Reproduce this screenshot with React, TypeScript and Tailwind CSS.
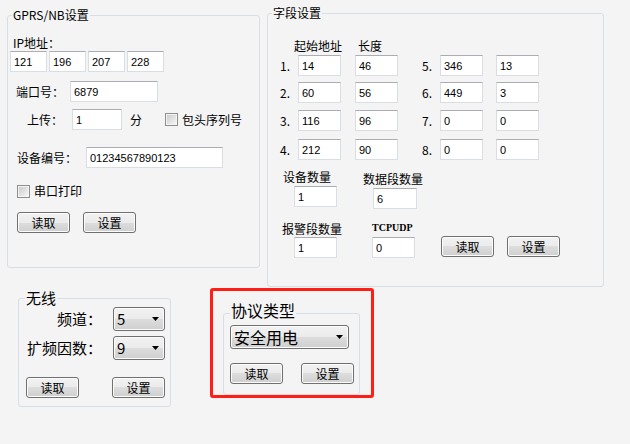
import type { ReactNode } from 'react';

const cjk = "font-['Noto_Sans_CJK_SC',sans-serif]";

function GroupBox({
  title,
  titleClass,
  className,
  children,
}: {
  title: string;
  titleClass: string;
  className: string;
  children: ReactNode;
}) {
  return (
    <div className={`relative shrink-0 rounded-[3px] border border-[#d5dfe5] ${className}`}>
      <span className={`absolute whitespace-nowrap bg-[#f4f4f4] px-[1px] ${titleClass}`}>{title}</span>
      {children}
    </div>
  );
}

function TextBox({ value, className = '' }: { value: string; className?: string }) {
  return (
    <input
      defaultValue={value}
      className={`h-[21px] shrink-0 border border-[#d9dde4] border-t-[#abadb3] bg-white pl-[3px] font-['Liberation_Sans',sans-serif] text-[11px] leading-[19px] text-black outline-none ${className}`}
    />
  );
}

function Btn({ label, className = '' }: { label: string; className?: string }) {
  return (
    <button
      className={`h-[21px] w-[53px] shrink-0 rounded-[3px] border border-[#707070] bg-[linear-gradient(#f2f2f2_0%,#ebebeb_50%,#dddddd_50%,#cfcfcf_100%)] text-[12px] leading-[19px] text-black shadow-[inset_0_0_0_1px_#fcfcfc] ${className}`}
    >
      {label}
    </button>
  );
}

function Combo({ value, className = '' }: { value: string; className?: string }) {
  return (
    <div
      className={`flex h-[24px] shrink-0 items-center justify-between rounded-[3px] border border-[#707070] bg-[linear-gradient(#f2f2f2_0%,#ebebeb_50%,#dddddd_50%,#cfcfcf_100%)] pl-[3px] pr-[5px] shadow-[inset_0_0_0_1px_#fcfcfc] ${className}`}
    >
      <span className="leading-[20px]">{value}</span>
      <svg width="7" height="4" viewBox="0 0 7 4">
        <path d="M0 0H7L3.5 4Z" fill="#000" />
      </svg>
    </div>
  );
}

function CheckBox({ className = '' }: { className?: string }) {
  return (
    <span className={`flex h-[13px] w-[13px] shrink-0 items-center justify-center border border-[#8f8f8f] bg-[#f4f4f4] ${className}`}>
      <span className="h-[9px] w-[9px] bg-[linear-gradient(135deg,#cbcbcb,#f6f6f6)]" />
    </span>
  );
}

export default function App() {
  const fields = [
    ['1.', '14', '46', '5.', '346', '13', 'mt-[2px]'],
    ['2.', '60', '56', '6.', '449', '3', 'mt-[6px]'],
    ['3.', '116', '96', '7.', '0', '0', 'mt-[7px]'],
    ['4.', '212', '90', '8.', '0', '0', 'mt-[8px]'],
  ];

  return (
    <div className={`flex h-[444px] w-[630px] flex-col overflow-hidden bg-[#f4f4f4] text-[12px] leading-[14px] text-black ${cjk}`}>
      {/* top row */}
      <div className="flex items-start">
        <GroupBox title="GPRS/NB设置" titleClass="-top-[8px] left-[4px]" className="ml-[7px] mt-[15px] h-[253px] w-[253px]">
          <div className="ml-[5px] mt-[20px]">IP地址：</div>
          <div className="ml-[2px] mt-[1px] flex gap-[2px]">
            <TextBox value="121" className="w-[37px]" />
            <TextBox value="196" className="w-[37px]" />
            <TextBox value="207" className="w-[37px]" />
            <TextBox value="228" className="w-[37px]" />
          </div>
          <div className="ml-[8px] mt-[9px] flex items-center">
            <span className="w-[54px]">端口号：</span>
            <TextBox value="6879" className="w-[88px]" />
          </div>
          <div className="ml-[19px] mt-[7px] flex items-center">
            <span className="w-[45px]">上传：</span>
            <TextBox value="1" className="w-[50px]" />
            <span className="ml-[8px]">分</span>
            <CheckBox className="ml-[23px]" />
            <span className="ml-[4px]">包头序列号</span>
          </div>
          <div className="ml-[9px] mt-[17px] flex items-center">
            <span className="w-[69px]">设备编号：</span>
            <TextBox value="01234567890123" className="h-[20px] w-[137px]" />
          </div>
          <div className="ml-[9px] mt-[16px] flex items-center">
            <CheckBox />
            <span className="ml-[4px]">串口打印</span>
          </div>
          <div className="ml-[9px] mt-[14px] flex gap-[13px]">
            <Btn label="读取" />
            <Btn label="设置" />
          </div>
        </GroupBox>

        <GroupBox title="字段设置" titleClass="-top-[8px] left-[4px]" className="ml-[7px] mt-[13px] h-[274px] w-[337px]">
          <div className="ml-[26px] mt-[25px] flex">
            <span>起始地址</span>
            <span className="ml-[16px]">长度</span>
          </div>
          {fields.map(([a, b, c, d, e, f, mt]) => (
            <div key={a} className={`ml-[12px] flex items-center ${mt}`}>
              <span className="w-[18px]">{a}</span>
              <TextBox value={b} className="w-[43px]" />
              <TextBox value={c} className="ml-[14px] w-[43px]" />
              <span className="ml-[24px] w-[18px]">{d}</span>
              <TextBox value={e} className="w-[43px]" />
              <TextBox value={f} className="ml-[13px] w-[43px]" />
            </div>
          ))}
          <div className="ml-[15px] mt-[10px] flex items-start">
            <div className="flex w-[80px] flex-col">
              <span>设备数量</span>
              <TextBox value="1" className="ml-[11px] mt-[2px] w-[43px]" />
            </div>
            <div className="mt-[2px] flex flex-col">
              <span>数据段数量</span>
              <TextBox value="6" className="ml-[10px] mt-[2px] w-[44px]" />
            </div>
          </div>
          <div className="ml-[14px] mt-[13px] flex items-end">
            <div className="flex w-[90px] flex-col">
              <span>报警段数量</span>
              <TextBox value="1" className="ml-[12px] mt-[1px] w-[43px]" />
            </div>
            <div className="flex flex-col">
              <span className="font-['Liberation_Serif',serif] text-[10px] font-bold leading-[12px]">TCPUDP</span>
              <TextBox value="0" className="mt-[3px] w-[43px]" />
            </div>
            <Btn label="读取" className="mb-[1px] ml-[26px]" />
            <Btn label="设置" className="mb-[1px] ml-[13px]" />
          </div>
        </GroupBox>
      </div>

      {/* bottom row */}
      <div className="flex items-start">
        <GroupBox title="无线" titleClass="-top-[10px] left-[6px] text-[15px] leading-[18px]" className="ml-[18px] mt-[11px] h-[109px] w-[153px]">
          <div className="ml-[5px] mt-[8px] flex items-center text-[15px]">
            <span className="w-[78px] text-right">频道：</span>
            <Combo value="5" className="ml-[11px] w-[52px]" />
          </div>
          <div className="ml-[5px] mt-[5px] flex items-center text-[15px]">
            <span className="w-[78px] text-right">扩频因数：</span>
            <Combo value="9" className="ml-[11px] w-[52px]" />
          </div>
          <div className="ml-[7px] mt-[17px] flex gap-[33px]">
            <Btn label="读取" className="h-[20px] w-[52px] leading-[18px]" />
            <Btn label="设置" className="h-[20px] w-[52px] leading-[18px]" />
          </div>
        </GroupBox>

        <div className="ml-[39px] mt-[1px] h-[110px] w-[164px] shrink-0 rounded-[3px] border-[3px] border-[#ff1d16] pl-[10px] pt-[22px]">
          <GroupBox title="协议类型" titleClass="-top-[13px] left-[6px] text-[16px] leading-[18px]" className="h-[82px] w-[137px]">
            <Combo value="安全用电" className="ml-[6px] mt-[11px] w-[119px] text-[16px]" />
            <div className="ml-[6px] mt-[14px] flex gap-[18px]">
              <Btn label="读取" className="h-[20px] w-[52px] leading-[18px]" />
              <Btn label="设置" className="h-[20px] w-[52px] leading-[18px]" />
            </div>
          </GroupBox>
        </div>
      </div>
    </div>
  );
}
